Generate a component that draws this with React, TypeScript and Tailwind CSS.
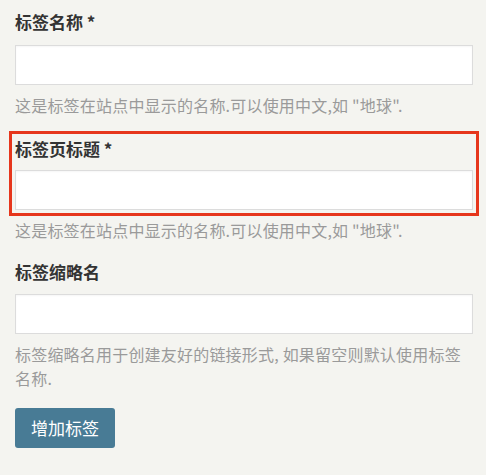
import React from 'react';

const font = { fontFamily: '"Noto Sans CJK SC", "Liberation Sans", sans-serif' };

const Help: React.FC<{ children: React.ReactNode; className?: string }> = ({ children, className = '' }) => (
  <p className={`text-[16px] leading-[24px] tracking-[0.2px] text-[#9a9a9a] ${className}`}>{children}</p>
);

const Label: React.FC<{ children: React.ReactNode }> = ({ children }) => (
  <label className="block text-[17px] leading-[24px] font-bold text-[#333]">{children}</label>
);

const Input: React.FC = () => (
  <input
    type="text"
    className="block w-full h-[40px] bg-white border border-[#dcdcdc] shadow-[inset_0_1px_2px_rgba(0,0,0,0.04)] px-2 outline-none"
  />
);

export default function App() {
  return (
    <div className="min-h-[475px] w-full bg-[#f4f4f0] pl-[15px] pr-[13px] pt-[10px]" style={font}>
      {/* Tag name */}
      <div>
        <Label>标签名称 *</Label>
        <div className="mt-[11px]">
          <Input />
        </div>
        <Help className="mt-[8px]">这是标签在站点中显示的名称.可以使用中文,如 "地球".</Help>
      </div>

      {/* Tag page title (highlighted) */}
      <div className="mt-[20px] outline-[3px] outline-solid outline-[#e6361c] outline-offset-[3px]">
        <Label>标签页标题 *</Label>
        <div className="mt-[9px]">
          <Input />
        </div>
      </div>
      <Help className="mt-[8px]">这是标签在站点中显示的名称.可以使用中文,如 "地球".</Help>

      {/* Slug */}
      <div className="mt-[18px]">
        <Label>标签缩略名</Label>
        <div className="mt-[10px]">
          <Input />
        </div>
        <Help className="mt-[8px]">标签缩略名用于创建友好的链接形式, 如果留空则默认使用标签名称.</Help>
      </div>

      <button className="mt-[18px] h-[40px] w-[100px] rounded-[3px] bg-[#487b95] text-[17px] text-white">
        增加标签
      </button>
    </div>
  );
}
